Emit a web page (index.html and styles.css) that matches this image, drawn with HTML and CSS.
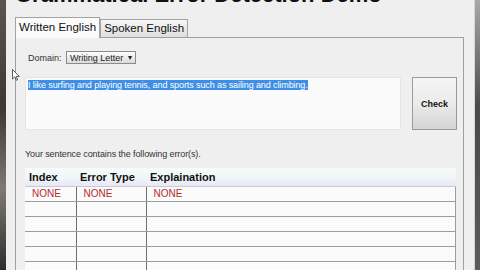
FILE: index.html
```html
<!DOCTYPE html>
<html lang="en">
<head>
    <meta charset="UTF-8">
    <title>Grammatical Error Detection Demo</title>
    <link rel="stylesheet" href="styles.css">
</head>
<body>
    <div class="edge edge-left"></div>
    <div class="window">
        <h1 class="title">Grammatical Error Detection Demo</h1>

        <div class="tabs">
            <div class="tab active">Written English</div>
            <div class="tab">Spoken English</div>
        </div>

        <div class="panel">
            <div class="domain-row">
                <span class="label">Domain:</span>
                <div class="select">
                    <span>Writing Letter</span>
                    <span class="arrow">&#9662;</span>
                </div>
            </div>

            <div class="input-row">
                <div class="textbox">
                    <span class="selected">I like surfing and playing tennis, and sports such as sailing and climbing.</span>
                </div>
                <button class="btn-check">Check</button>
            </div>

            <div class="result-label">Your sentence contains the following error(s).</div>

            <table class="errors">
                <thead>
                    <tr>
                        <th class="col-index">Index</th>
                        <th class="col-type">Error Type</th>
                        <th>Explaination</th>
                    </tr>
                </thead>
                <tbody>
                    <tr class="none">
                        <td>NONE</td>
                        <td>NONE</td>
                        <td>NONE</td>
                    </tr>
                    <tr><td></td><td></td><td></td></tr>
                    <tr><td></td><td></td><td></td></tr>
                    <tr><td></td><td></td><td></td></tr>
                    <tr><td></td><td></td><td></td></tr>
                    <tr><td></td><td></td><td></td></tr>
                </tbody>
            </table>
        </div>

        <!-- mouse pointer -->
        <svg class="cursor" width="8" height="12" viewBox="0 0 8 12">
            <path d="M0.5 0.5 L0.5 10 L2.8 7.8 L4.3 11.3 L5.6 10.7 L4.2 7.4 L7.3 7.4 Z" fill="#fff" stroke="#333" stroke-width="0.8"/>
        </svg>
    </div>
    <div class="edge edge-right"></div>
</body>
</html>
```

FILE: styles.css
```css
* {
    margin: 0;
    padding: 0;
    box-sizing: border-box;
}

html, body {
    width: 480px;
    height: 270px;
    overflow: hidden;
}

body {
    display: flex;
    font-family: "Liberation Sans", Arial, sans-serif;
    background: #efefef;
}

.edge {
    flex: none;
    height: 100%;
}

.edge-left {
    width: 6px;
    background: linear-gradient(180deg, #5a5550 0%, #3c3935 40%, #7d7a76 70%, #2f2d2b 100%);
}

.edge-right {
    width: 5px;
    background: linear-gradient(180deg, #a8a8a8 0%, #4a4a4c 40%, #5c5c60 100%);
}

.window {
    flex: 1;
    height: 270px;
    overflow: hidden;
    position: relative;
    background: #efefef;
    padding: 0 10px 0 9px;
    border-right: 1px solid #d6d6d6;
}

.title {
    font-size: 22px;
    line-height: 22px;
    font-weight: bold;
    color: #111;
    margin-top: -16px;
    margin-bottom: 11px;
    white-space: nowrap;
}

.tabs {
    display: flex;
    align-items: flex-end;
    height: 20px;
    font-size: 11.5px;
    color: #111;
}

.tab {
    height: 18px;
    line-height: 17px;
    padding: 0 3px;
    border: 1px solid #a3a3a3;
    border-bottom: none;
    background: linear-gradient(180deg, #f6f6f6 0%, #dedede 100%);
}

.tab.active {
    height: 21px;
    line-height: 19px;
    background: #fbfbfb;
    margin-bottom: -1px;
    position: relative;
    z-index: 1;
}

.panel {
    border: 1px solid #a0a0a0;
    border-bottom: none;
    background: #efefef;
    padding: 13px 6px 0 9px;
    height: 233px;
    overflow: hidden;
}

.domain-row {
    display: flex;
    align-items: center;
    height: 13px;
    padding-left: 3px;
    font-size: 9px;
    color: #333;
}

.label {
    width: 38px;
}

.select {
    width: 70px;
    height: 13px;
    border: 1px solid #8a8a8a;
    background: linear-gradient(180deg, #fdfdfd 0%, #dcdcdc 100%);
    display: flex;
    justify-content: space-between;
    align-items: center;
    padding: 0 3px;
    color: #222;
}

.arrow {
    font-size: 8px;
}

.input-row {
    display: flex;
    gap: 11px;
    margin-top: 13px;
    height: 53px;
}

.textbox {
    flex: 1;
    background: #fafafa;
    border: 1px solid #e6e6e6;
    padding: 3px 2px;
    font-size: 9px;
    line-height: 9px;
    letter-spacing: -0.1px;
}

.selected {
    background: #3d8ee6;
    color: #fff;
}

.btn-check {
    width: 45px;
    border: 1px solid #9a9a9a;
    background: linear-gradient(180deg, #f5f5f5 0%, #ebebeb 50%, #d4d4d4 100%);
    font-family: inherit;
    font-size: 9px;
    font-weight: bold;
    color: #111;
}

.result-label {
    margin-top: 19px;
    font-size: 9px;
    letter-spacing: -0.1px;
    color: #333;
}

.errors {
    margin-top: 9px;
    width: 431px;
    border-collapse: collapse;
    background: #fbfbfb;
}

.errors th {
    height: 18px;
    text-align: left;
    padding-left: 4px;
    font-size: 11px;
    color: #111;
    background: linear-gradient(180deg, #f6fcfa 0%, #eef4f8 60%, #e8e8f4 100%);
    border-bottom: 1px solid #c8c8d8;
}

.col-index {
    width: 51px;
}

.col-type {
    width: 70px;
}

.errors td {
    height: 15px;
    padding-left: 7px;
    font-size: 10px;
    border-bottom: 1px solid #9c9c9c;
    border-left: 1px solid #6e6e6e;
}

.errors td:first-child {
    border-left: none;
}

.errors td:last-child {
    border-right: 1px solid #9c9c9c;
}

.none td {
    color: #b52b2b;
}

.cursor {
    position: absolute;
    left: 6px;
    top: 69px;
}
```
